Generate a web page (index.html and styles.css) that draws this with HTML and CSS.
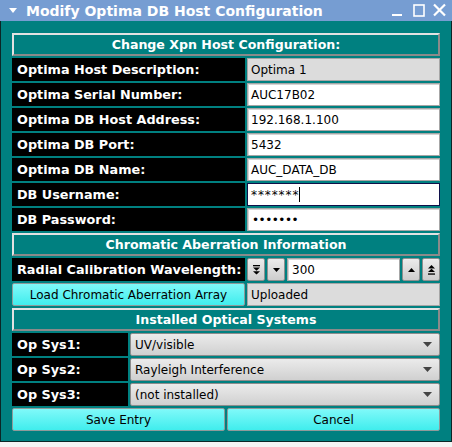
FILE: index.html
```html
<!DOCTYPE html>
<html>
<head>
<meta charset="utf-8">
<title>Modify Optima DB Host Configuration</title>
<link rel="stylesheet" href="styles.css">
</head>
<body>
<div class="window">
  <div class="titlebar">
    <svg class="title-arrow" width="8" height="5" viewBox="0 0 8 5"><polygon points="0,0 8,0 4,5" fill="#fff"/></svg>
    <span class="title">Modify Optima DB Host Configuration</span>
    <svg class="controls" width="62" height="21" viewBox="0 0 62 21">
      <rect x="2" y="14" width="10" height="2" fill="#fff"/>
      <rect x="24" y="5" width="10" height="11" fill="none" stroke="#fff" stroke-width="1.6"/>
      <path d="M44 4.5 L55 15.5 M55 4.5 L44 15.5" stroke="#fff" stroke-width="2.2" fill="none"/>
    </svg>
  </div>
  <div class="body">
    <div class="section">Change Xpn Host Configuration:</div>
    <div class="row"><div class="label">Optima Host Description:</div><div class="field readonly">Optima 1</div></div>
    <div class="row"><div class="label">Optima Serial Number:</div><div class="field">AUC17B02</div></div>
    <div class="row"><div class="label">Optima DB Host Address:</div><div class="field">192.168.1.100</div></div>
    <div class="row"><div class="label">Optima DB Port:</div><div class="field">5432</div></div>
    <div class="row"><div class="label">Optima DB Name:</div><div class="field">AUC_DATA_DB</div></div>
    <div class="row"><div class="label">DB Username:</div><div class="field focus"><span class="stars">*******</span><span class="caret"></span></div></div>
    <div class="row"><div class="label">DB Password:</div><div class="field"><span class="dots">•••••••</span></div></div>
    <div class="section">Chromatic Aberration Information</div>
    <div class="row"><div class="label">Radial Calibration Wavelength:</div>
      <div class="spinner">
        <div class="spin"><svg width="7" height="10" viewBox="0 0 7 10"><rect x="0" y="0" width="7" height="1.3" fill="#000"/><polygon points="0,2.5 7,2.5 3.5,5.8" fill="#000"/><polygon points="0,6.2 7,6.2 3.5,9.6" fill="#000"/></svg></div>
        <div class="spin"><svg width="7" height="4" viewBox="0 0 7 4"><polygon points="0,0 7,0 3.5,4" fill="#000"/></svg></div>
        <div class="field spin-value">300</div>
        <div class="spin"><svg width="7" height="4" viewBox="0 0 7 4"><polygon points="0,4 7,4 3.5,0" fill="#000"/></svg></div>
        <div class="spin"><svg width="7" height="10" viewBox="0 0 7 10"><polygon points="0,3.4 7,3.4 3.5,0" fill="#000"/><polygon points="0,7.1 7,7.1 3.5,3.8" fill="#000"/><rect x="0" y="8.4" width="7" height="1.3" fill="#000"/></svg></div>
      </div>
    </div>
    <div class="row"><div class="button">Load Chromatic Aberration Array</div><div class="field readonly">Uploaded</div></div>
    <div class="section">Installed Optical Systems</div>
    <div class="row op"><div class="label">Op Sys1:</div><div class="combo"><span>UV/visible</span><svg width="9" height="5" viewBox="0 0 9 5"><polygon points="0,0 9,0 4.5,5" fill="#444"/></svg></div></div>
    <div class="row op"><div class="label">Op Sys2:</div><div class="combo"><span>Rayleigh Interference</span><svg width="9" height="5" viewBox="0 0 9 5"><polygon points="0,0 9,0 4.5,5" fill="#444"/></svg></div></div>
    <div class="row op"><div class="label">Op Sys3:</div><div class="combo"><span>(not installed)</span><svg width="9" height="5" viewBox="0 0 9 5"><polygon points="0,0 9,0 4.5,5" fill="#444"/></svg></div></div>
    <div class="row btns"><div class="button">Save Entry</div><div class="button">Cancel</div></div>
  </div>
</div>
</body>
</html>
```
FILE: styles.css
```css
* { box-sizing: border-box; }
html, body { margin: 0; padding: 0; }
body {
  width: 452px;
  height: 447px;
  overflow: hidden;
  background: #f4f4f4;
  font-family: "DejaVu Sans", "Liberation Sans", sans-serif;
}
.window { width: 452px; }
.titlebar {
  height: 21px;
  background: #769dd2;
  display: flex;
  align-items: center;
  color: #fff;
  font-weight: bold;
  font-size: 14px;
  padding-left: 9px;
}
.title-arrow { flex: none; margin-right: 9px; }
.title { flex: 1; white-space: nowrap; }
.controls { flex: none; }
.body {
  background: #008080;
  border: 1px solid #0b2626;
  border-top: none;
  padding: 12px 11px 10px 11px;
  display: flex;
  flex-direction: column;
  gap: 2px;
}
.section {
  height: 23px;
  border: 2px solid;
  border-color: #e2e2e2 #8a8a8a #8a8a8a #e2e2e2;
  color: #fff;
  font-weight: bold;
  font-size: 12.6px;
  display: flex;
  align-items: center;
  justify-content: center;
  white-space: nowrap;
}
.row {
  height: 23px;
  display: grid;
  grid-template-columns: 233px 1fr;
  gap: 2px;
}
.row.op { grid-template-columns: 116px 1fr; }
.row.btns { grid-template-columns: 1fr 1fr; }
.label {
  background: #000;
  color: #fff;
  font-weight: bold;
  font-size: 12.8px;
  padding-left: 5px;
  display: flex;
  align-items: center;
  white-space: nowrap;
  overflow: hidden;
}
.field {
  background: #fff;
  border: 1px solid #a6a6a6;
  box-shadow: inset 1px 1px 0 #d4d4d4;
  font-size: 12px;
  padding-left: 3px;
  display: flex;
  align-items: center;
  color: #000;
  white-space: nowrap;
}
.field.readonly { background: #dcdcdc; box-shadow: none; }
.field.focus { border-color: #10104a; box-shadow: none; }
.stars { letter-spacing: 0.9px; }
.caret { width: 1px; height: 15px; background: #000; margin-left: 0; }
.dots { letter-spacing: -0.5px; padding-left: 1px; }
.spinner {
  display: grid;
  grid-template-columns: 18px 18px 1fr 18px 18px;
  gap: 2px;
}
.spin {
  background: linear-gradient(#ececec, #cdcdcd);
  border: 1px solid #8e8e8e;
  border-radius: 2px;
  display: flex;
  align-items: center;
  justify-content: center;
}
.spin-value { padding-left: 4px; }
.button {
  background: linear-gradient(#80f9f9, #40eded);
  border: 1px solid #8f9a9a;
  border-radius: 2px;
  font-size: 12px;
  color: #000;
  display: flex;
  align-items: center;
  justify-content: center;
  white-space: nowrap;
}
.combo {
  background: linear-gradient(#ebebeb, #d0d0d0);
  border: 1px solid #8c8c8c;
  border-radius: 2px;
  font-size: 12px;
  color: #000;
  display: flex;
  align-items: center;
  justify-content: space-between;
  padding: 0 7px 0 4px;
  white-space: nowrap;
}
```
